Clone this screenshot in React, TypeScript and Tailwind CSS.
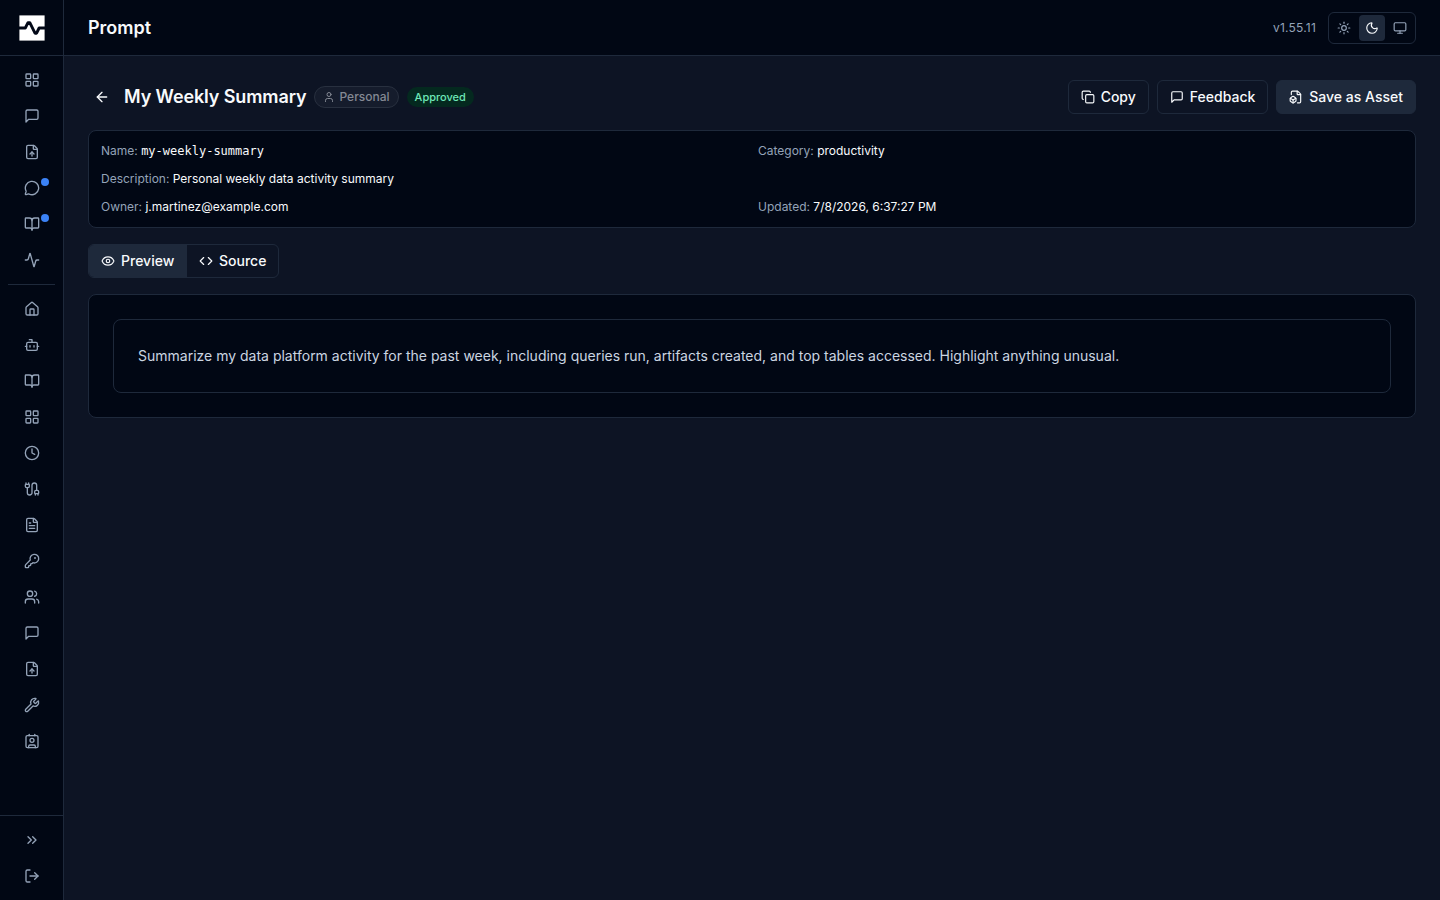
import React from "react";
import {
  Activity,
  ArrowLeft,
  BookOpen,
  Bot,
  Cable,
  ChevronsRight,
  Clock,
  Code,
  Contact,
  Copy,
  Eye,
  FileBox,
  FileText,
  FileUp,
  House,
  KeyRound,
  LayoutGrid,
  LogOut,
  MessageCircle,
  Monitor,
  Moon,
  Sun,
  User,
  Users,
  Wrench,
} from "lucide-react";

type IconType = React.ComponentType<{ size?: number }>;
type NavItem = { label: string; icon: IconType; unread?: boolean };

// square speech bubble with the tail in the corner
const MessageIcon = ({ size = 16 }: { size?: number }) => (
  <svg
    width={size}
    height={size}
    viewBox="0 0 24 24"
    fill="none"
    stroke="currentColor"
    strokeWidth="2"
    strokeLinecap="round"
    strokeLinejoin="round"
  >
    <path d="M21 15a2 2 0 0 1-2 2H7l-4 4V5a2 2 0 0 1 2-2h14a2 2 0 0 1 2 2z" />
  </svg>
);

const userNav: NavItem[] = [
  { label: "Dashboard", icon: LayoutGrid },
  { label: "Prompts", icon: MessageIcon },
  { label: "Assets", icon: FileUp },
  { label: "Feedback", icon: MessageCircle, unread: true },
  { label: "Knowledge", icon: BookOpen, unread: true },
  { label: "Activity", icon: Activity },
];

const adminNav: NavItem[] = [
  { label: "Home", icon: House },
  { label: "Agents", icon: Bot },
  { label: "Library", icon: BookOpen },
  { label: "Apps", icon: LayoutGrid },
  { label: "History", icon: Clock },
  { label: "Connections", icon: Cable },
  { label: "Documents", icon: FileText },
  { label: "Keys", icon: KeyRound },
  { label: "Users", icon: Users },
  { label: "Messages", icon: MessageIcon },
  { label: "Uploads", icon: FileUp },
  { label: "Tools", icon: Wrench },
  { label: "Personas", icon: Contact },
];

const Logo = () => (
  <svg width="26" height="26" viewBox="0 0 26 26" className="shrink-0">
    <rect x="0.4" y="0.4" width="25.2" height="25.2" fill="#fff" />
    <path
      d="M0 13h6.3L9 7.6h1.8l5.2 10.6h1.6l2.5-5.2H26"
      fill="none"
      stroke="#020817"
      strokeWidth="2.9"
      strokeLinejoin="round"
    />
  </svg>
);

const NavButton = ({ item }: { item: NavItem }) => {
  const Icon = item.icon;
  return (
    <button
      aria-label={item.label}
      className="relative flex h-8 w-full items-center justify-center rounded-md"
    >
      <Icon size={16} />
      {item.unread && (
        <span className="absolute right-1.5 top-1.5 h-2 w-2 rounded-full bg-[#3b82f6]" />
      )}
    </button>
  );
};

const Sidebar = () => (
  <aside className="flex w-16 shrink-0 flex-col border-r border-[#1e293b] bg-[#010714] text-[#94a3b8]">
    <div className="flex h-14 shrink-0 items-center justify-center border-b border-[#1e293b]">
      <Logo />
    </div>
    <nav className="flex flex-1 flex-col gap-1 p-2">
      {userNav.map((item) => (
        <NavButton key={item.label} item={item} />
      ))}
      <div className="my-1 h-px bg-[#1e293b]" />
      {adminNav.map((item) => (
        <NavButton key={item.label} item={item} />
      ))}
    </nav>
    <div className="flex flex-col gap-1 border-t border-[#1e293b] p-2">
      <button aria-label="Expand" className="flex h-8 items-center justify-center">
        <ChevronsRight size={16} />
      </button>
      <button aria-label="Sign out" className="flex h-8 items-center justify-center">
        <LogOut size={16} />
      </button>
    </div>
  </aside>
);

const Header = () => (
  <header className="flex h-14 shrink-0 items-center justify-between border-b border-[#1e293b] bg-[#010714] px-6">
    <h1 className="text-lg font-semibold">Prompt</h1>
    <div className="flex items-center gap-3 text-[#94a3b8]">
      <span className="text-xs tracking-[0.2px]">v1.55.11</span>
      <div className="flex items-center gap-0.5 rounded-md border border-[#1e293b] p-0.5">
        <button aria-label="Light" className="rounded p-1.5">
          <Sun size={14} />
        </button>
        <button aria-label="Dark" className="rounded bg-[#1e293b] p-1.5 text-[#f8fafc]">
          <Moon size={14} />
        </button>
        <button aria-label="System" className="rounded p-1.5">
          <Monitor size={14} />
        </button>
      </div>
    </div>
  </header>
);

type FieldProps = { label: string; value: string; className?: string; mono?: boolean };

const Field = ({ label, value, className, mono }: FieldProps) => (
  <div className={className}>
    <span className="text-[#94a3b8]">{label}:</span>{" "}
    <span className={mono ? "font-['DejaVu_Sans_Mono',monospace]" : undefined}>{value}</span>
  </div>
);

const App = () => {
  return (
    <div className="flex h-screen overflow-hidden bg-[#0d1424] font-['Inter',sans-serif] text-[#f8fafc]">
      <Sidebar />
      <div className="flex min-w-0 flex-1 flex-col">
        <Header />
        <main className="flex flex-1 flex-col gap-4 p-6">
          <div className="flex h-[34px] items-center justify-between">
            <div className="flex items-center gap-2">
              <button aria-label="Back" className="rounded-md p-1.5">
                <ArrowLeft size={16} />
              </button>
              <h2 className="text-lg font-semibold tracking-[-0.11px]">My Weekly Summary</h2>
              <span className="flex items-center gap-1 rounded-full border border-[#28303f] bg-[#151c2c] px-2 py-0.5 text-xs font-medium text-[#848994]">
                <User size={12} />
                Personal
              </span>
              <span className="rounded-full bg-[#04291f] px-2 py-0.5 text-[11px] font-medium text-[#6ee7b7]">
                Approved
              </span>
            </div>
            <div className="flex gap-2 text-sm font-medium">
              <button className="flex items-center gap-1.5 rounded-md border border-[#1e293b] px-3 py-1.5">
                <Copy size={14} />
                Copy
              </button>
              <button className="flex items-center gap-1.5 rounded-md border border-[#1e293b] px-3 py-1.5">
                <MessageIcon size={14} />
                Feedback
              </button>
              <button className="flex items-center gap-1.5 rounded-md border border-[#1e293b] bg-[#1e293b] px-3 py-1.5">
                <FileBox size={14} />
                Save as Asset
              </button>
            </div>
          </div>

          <section className="grid grid-cols-2 gap-3 rounded-lg border border-[#1e293b] bg-[#010714] p-3 text-xs">
            <Field label="Name" value="my-weekly-summary" mono />
            <Field label="Category" value="productivity" />
            <Field
              label="Description"
              value="Personal weekly data activity summary"
              className="col-span-2"
            />
            <Field label="Owner" value="j.martinez@example.com" />
            <Field label="Updated" value="7/8/2026, 6:37:27 PM" />
          </section>

          <div className="flex w-fit overflow-hidden rounded-md border border-[#1e293b] text-sm font-medium">
            <button className="flex w-[98px] items-center gap-1.5 bg-[#1e293b] px-3 py-1.5">
              <Eye size={14} />
              Preview
            </button>
            <button className="flex w-[91px] items-center gap-1.5 pl-3 py-1.5">
              <Code size={14} />
              Source
            </button>
          </div>

          <section className="rounded-lg border border-[#1e293b] bg-[#010714] p-6">
            <div className="rounded-lg border border-[#1e293b] p-6">
              <p className="text-sm leading-6 text-[#cbd5e1]">
                Summarize my data platform activity for the past week, including queries run,
                artifacts created, and top tables accessed. Highlight anything unusual.
              </p>
            </div>
          </section>
        </main>
      </div>
    </div>
  );
};

export default App;
